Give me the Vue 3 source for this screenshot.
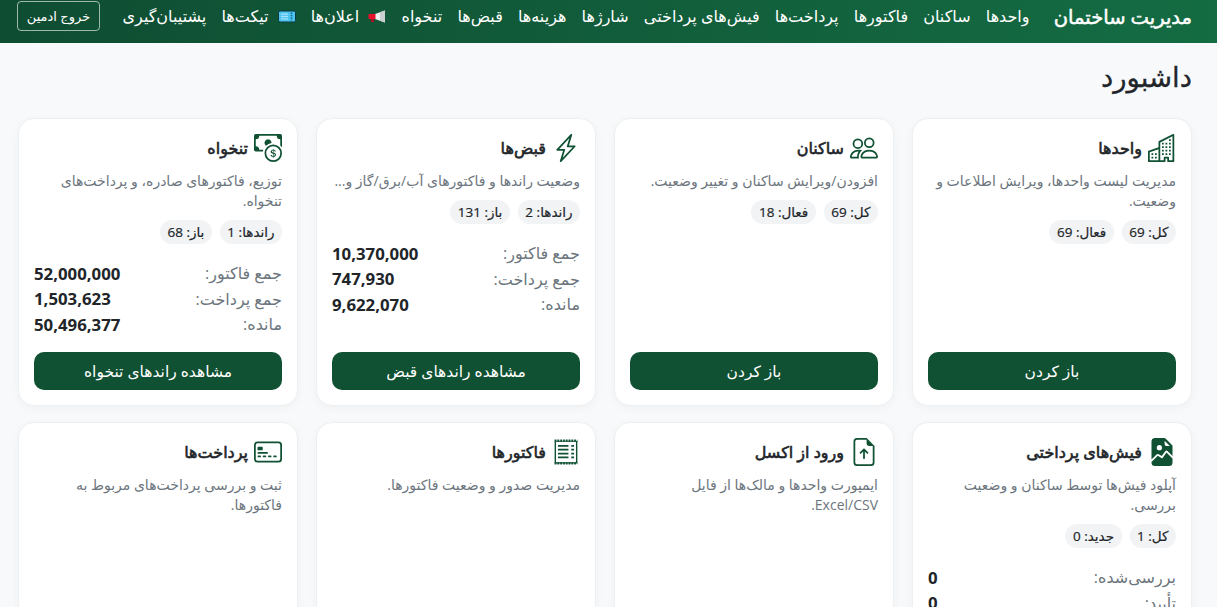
<template>
  <div class="page" dir="rtl">
    <nav class="navbar">
      <span class="brand">مدیریت ساختمان</span>
      <a v-for="link in links" :key="link.text" class="nav-link">
        <svg v-if="link.icon === 'megaphone'" class="emoji" viewBox="0 0 18 13">
          <path d="M17 0.5 7 4v5l10 3.5z" fill="#eef0f0" />
          <path d="M17 0.5 12 2.3v8.4l5 1.8z" fill="#c9cfcf" />
          <rect x="0.5" y="4" width="7" height="5" rx="0.5" fill="#e8112d" />
          <rect x="3" y="9" width="3" height="3" fill="#b00d22" />
        </svg>
        <svg v-if="link.icon === 'ticket'" class="emoji" viewBox="0 0 18 12">
          <rect x="0.5" y="0.5" width="17" height="11" rx="1.5" fill="#4fc3f0" stroke="#063a3f" />
          <rect x="3" y="3" width="7" height="1.2" fill="#a5e3fa" />
          <rect x="3" y="5.4" width="7" height="1.2" fill="#a5e3fa" />
          <rect x="3" y="7.8" width="7" height="1.2" fill="#a5e3fa" />
          <path d="M13.5 2v8" stroke="#0f6b8c" stroke-width="1.6" stroke-dasharray="1.4 1" />
        </svg>
        {{ link.text }}
      </a>
      <button class="logout">خروج ادمین</button>
    </nav>

    <main class="content">
      <h1 class="page-title">داشبورد</h1>
      <div class="grid">
        <section v-for="card in cards" :key="card.title" class="card">
          <div class="card-head">
            <svg class="icon" viewBox="0 0 16 16" fill="currentColor" v-html="icons[card.icon]"></svg>
            <h2>{{ card.title }}</h2>
          </div>
          <p class="desc">{{ card.desc }}</p>
          <div v-if="card.chips" class="chips">
            <span v-for="chip in card.chips" :key="chip" class="chip">{{ chip }}</span>
          </div>
          <div v-if="card.metrics" class="metrics">
            <div v-for="m in card.metrics" :key="m[0]" class="metric">
              <span class="metric-label">{{ m[0] }}</span>
              <b class="metric-value">{{ m[1] }}</b>
            </div>
          </div>
          <button class="open-btn">{{ card.action || 'باز کردن' }}</button>
        </section>
      </div>
    </main>
  </div>
</template>

<script setup>
const links = [
  { text: 'واحدها' },
  { text: 'ساکنان' },
  { text: 'فاکتورها' },
  { text: 'پرداخت‌ها' },
  { text: 'فیش‌های پرداختی' },
  { text: 'شارژها' },
  { text: 'هزینه‌ها' },
  { text: 'قبض‌ها' },
  { text: 'تنخواه' },
  { text: 'اعلان‌ها', icon: 'megaphone' },
  { text: 'تیکت‌ها', icon: 'ticket' },
  { text: 'پشتیبان‌گیری' }
]

const icons = {
  buildings:
    '<path d="M14.763.075A.5.5 0 0 1 15 .5v15a.5.5 0 0 1-.5.5h-3a.5.5 0 0 1-.5-.5V14h-1v1.5a.5.5 0 0 1-.5.5h-9a.5.5 0 0 1-.5-.5V10a.5.5 0 0 1 .342-.474L6 7.64V4.5a.5.5 0 0 1 .276-.447l8-4a.5.5 0 0 1 .487.022ZM6 8.694 1 10.36V15h5V8.694ZM7 15h2v-1.5a.5.5 0 0 1 .5-.5h2a.5.5 0 0 1 .5.5V15h2V1.309l-7 3.5V15Z"/><path d="M2 11h1v1H2v-1Zm2 0h1v1H4v-1Zm-2 2h1v1H2v-1Zm2 0h1v1H4v-1Zm4-4h1v1H8V9Zm2 0h1v1h-1V9Zm-2 2h1v1H8v-1Zm2 0h1v1h-1v-1Zm2-2h1v1h-1V9Zm0 2h1v1h-1v-1ZM8 7h1v1H8V7Zm2 0h1v1h-1V7Zm2 0h1v1h-1V7ZM8 5h1v1H8V5Zm2 0h1v1h-1V5Zm2 0h1v1h-1V5Zm0-2h1v1h-1V3Z"/>',
  people:
    '<path d="M15 14s1 0 1-1-1-4-5-4-5 3-5 4 1 1 1 1h8Zm-7.978-1A.261.261 0 0 1 7 12.996c.001-.264.167-1.03.76-1.72C8.312 10.629 9.282 10 11 10c1.717 0 2.687.63 3.24 1.276.593.69.758 1.457.76 1.72l-.008.002a.274.274 0 0 1-.014.002H7.022ZM11 7a2 2 0 1 0 0-4 2 2 0 0 0 0 4Zm3-2a3 3 0 1 1-6 0 3 3 0 0 1 6 0ZM6.936 9.28a5.88 5.88 0 0 0-1.23-.247A7.35 7.35 0 0 0 5 9c-4 0-5 3-5 4 0 .667.333 1 1 1h4.216A2.238 2.238 0 0 1 5 13c0-1.01.377-2.042 1.09-2.904.243-.294.526-.569.846-.816ZM4.92 10A5.493 5.493 0 0 0 4 13H1c0-.26.164-1.03.76-1.724.545-.636 1.492-1.256 3.16-1.275ZM1.5 5.5a3 3 0 1 1 6 0 3 3 0 0 1-6 0Zm3-2a2 2 0 1 0 0 4 2 2 0 0 0 0-4Z"/>',
  bolt:
    '<path d="M11.251.068a.5.5 0 0 1 .227.58L9.677 6.5H13a.5.5 0 0 1 .364.843l-8 8.5a.5.5 0 0 1-.842-.49L6.323 9.5H3a.5.5 0 0 1-.364-.843l8-8.5a.5.5 0 0 1 .615-.09zM4.157 8.5H7a.5.5 0 0 1 .478.647L6.11 13.59l5.732-6.09H9a.5.5 0 0 1-.478-.647L9.89 2.41 4.157 8.5z"/>',
  cash:
    '<path fill-rule="evenodd" d="M11 15a4 4 0 1 0 0-8 4 4 0 0 0 0 8zm5-4a5 5 0 1 1-10 0 5 5 0 0 1 10 0z"/><path d="M9.438 11.944c.047.596.518 1.06 1.363 1.116v.44h.375v-.443c.875-.061 1.386-.529 1.386-1.207 0-.618-.39-.936-1.09-1.1l-.296-.07v-1.2c.376.043.614.248.671.532h.658c-.047-.575-.54-1.024-1.329-1.073V8.5h-.375v.45c-.747.073-1.255.522-1.255 1.158 0 .562.378.92 1.007 1.066l.248.061v1.272c-.384-.058-.639-.27-.696-.563h-.668zm1.36-1.354c-.369-.085-.569-.26-.569-.522 0-.294.216-.514.572-.578v1.1h-.003zm.432.746c.449.104.655.272.655.569 0 .339-.257.571-.709.614v-1.195l.054.012z"/><path d="M1 0a1 1 0 0 0-1 1v8a1 1 0 0 0 1 1h4.083c.058-.344.145-.678.258-1H3a2 2 0 0 0-2-2V3a2 2 0 0 0 2-2h10a2 2 0 0 0 2 2v3.528c.38.34.717.728 1 1.154V1a1 1 0 0 0-1-1H1z"/><path d="M9.998 5.083 10 5a2 2 0 1 0-3.132 1.65 5.982 5.982 0 0 1 3.13-1.567z"/>',
  image:
    '<path d="M4 0h5.293A1 1 0 0 1 10 .293L13.707 4a1 1 0 0 1 .293.707v5.586l-2.73-2.73a1 1 0 0 0-1.52.127l-1.889 2.644-1.769-1.062a1 1 0 0 0-1.222.15L2 12.292V2a2 2 0 0 1 2-2zm5.5 1.5v2a1 1 0 0 0 1 1h2l-3-3zm-1.498 4a1.5 1.5 0 1 0-3 0 1.5 1.5 0 0 0 3 0z"/><path d="M10.564 8.27 14 11.708V14a2 2 0 0 1-2 2H4a2 2 0 0 1-2-2v-.293l3.578-3.577 2.56 1.536 2.426-3.395z"/>',
  upload:
    '<path d="M8.5 11.5a.5.5 0 0 1-1 0V7.707L6.354 8.854a.5.5 0 1 1-.708-.708l2-2a.5.5 0 0 1 .708 0l2 2a.5.5 0 0 1-.708.708L8.5 7.707V11.5z"/><path d="M14 14V4.5L9.5 0H4a2 2 0 0 0-2 2v12a2 2 0 0 0 2 2h8a2 2 0 0 0 2-2zM9.5 3A1.5 1.5 0 0 0 11 4.5h2V14a1 1 0 0 1-1 1H4a1 1 0 0 1-1-1V2a1 1 0 0 1 1-1h5.5v2z"/>',
  receipt:
    '<path d="M3.4 4h6v1h-6zm0 2.2h6v1h-6zm0 2.2h6v1h-6zm0 2.2h6v1h-6zM11 4h1.6v1H11zm0 2.2h1.6v1H11zm0 2.2h1.6v1H11zm0 2.2h1.6v1H11z"/><path fill-rule="evenodd" d="M1.5 1.5h13v13h-13zM2.3 2.2v11.6h11.4V2.2z"/><path d="M1.5 1.5h13" stroke="currentColor" stroke-width="1.2" stroke-dasharray="1 .6"/><path d="M1.5 14.5h13" stroke="currentColor" stroke-width="1.2" stroke-dasharray="1 .6"/>',
  card:
    '<path d="M14 3a1 1 0 0 1 1 1v8a1 1 0 0 1-1 1H2a1 1 0 0 1-1-1V4a1 1 0 0 1 1-1h12zM2 2a2 2 0 0 0-2 2v8a2 2 0 0 0 2 2h12a2 2 0 0 0 2-2V4a2 2 0 0 0-2-2H2z"/><path d="M2 5.5a.5.5 0 0 1 .5-.5h2a.5.5 0 0 1 .5.5v1a.5.5 0 0 1-.5.5h-2a.5.5 0 0 1-.5-.5v-1zm0 3a.5.5 0 0 1 .5-.5h5a.5.5 0 0 1 0 1h-5a.5.5 0 0 1-.5-.5zm0 2a.5.5 0 0 1 .5-.5h1a.5.5 0 0 1 0 1h-1a.5.5 0 0 1-.5-.5zm3 0a.5.5 0 0 1 .5-.5h1a.5.5 0 0 1 0 1h-1a.5.5 0 0 1-.5-.5zm3 0a.5.5 0 0 1 .5-.5h1a.5.5 0 0 1 0 1h-1a.5.5 0 0 1-.5-.5zm3 0a.5.5 0 0 1 .5-.5h1a.5.5 0 0 1 0 1h-1a.5.5 0 0 1-.5-.5z"/>'
}

const cards = [
  {
    title: 'واحدها',
    icon: 'buildings',
    desc: 'مدیریت لیست واحدها، ویرایش اطلاعات و وضعیت.',
    chips: ['کل: 69', 'فعال: 69']
  },
  {
    title: 'ساکنان',
    icon: 'people',
    desc: 'افزودن/ویرایش ساکنان و تغییر وضعیت.',
    chips: ['کل: 69', 'فعال: 18']
  },
  {
    title: 'قبض‌ها',
    icon: 'bolt',
    desc: 'وضعیت راندها و فاکتورهای آب/برق/گاز و...',
    chips: ['راندها: 2', 'باز: 131'],
    metrics: [
      ['جمع فاکتور:', '10,370,000'],
      ['جمع پرداخت:', '747,930'],
      ['مانده:', '9,622,070']
    ],
    action: 'مشاهده راندهای قبض'
  },
  {
    title: 'تنخواه',
    icon: 'cash',
    desc: 'توزیع، فاکتورهای صادره، و پرداخت‌های تنخواه.',
    chips: ['راندها: 1', 'باز: 68'],
    metrics: [
      ['جمع فاکتور:', '52,000,000'],
      ['جمع پرداخت:', '1,503,623'],
      ['مانده:', '50,496,377']
    ],
    action: 'مشاهده راندهای تنخواه'
  },
  {
    title: 'فیش‌های پرداختی',
    icon: 'image',
    desc: 'آپلود فیش‌ها توسط ساکنان و وضعیت بررسی.',
    chips: ['کل: 1', 'جدید: 0'],
    metrics: [
      ['بررسی‌شده:', '0'],
      ['تأیید:', '0'],
      ['رد:', '0']
    ]
  },
  {
    title: 'ورود از اکسل',
    icon: 'upload',
    desc: 'ایمپورت واحدها و مالک‌ها از فایل Excel/CSV.'
  },
  {
    title: 'فاکتورها',
    icon: 'receipt',
    desc: 'مدیریت صدور و وضعیت فاکتورها.'
  },
  {
    title: 'پرداخت‌ها',
    icon: 'card',
    desc: 'ثبت و بررسی پرداخت‌های مربوط به فاکتورها.'
  }
]
</script>

<style>
html,
body {
  margin: 0;
  overflow: hidden;
  background: #f8f9fb;
}
</style>

<style scoped>
.page {
  min-height: 607px;
  font-family: "Open Sans", "DejaVu Sans", sans-serif;
  color: #212529;
  background: #f8f9fb;
}

.navbar {
  height: 43px;
  box-sizing: border-box;
  display: flex;
  align-items: center;
  padding: 0 25px 11px 17px;
  gap: 15.2px;
  background: linear-gradient(90deg, #0f4d32, #146c43);
  color: #fff;
}

.brand {
  flex: none;
  font-size: 19.5px;
  font-weight: 400;
  white-space: nowrap;
  -webkit-text-stroke: 0.5px #fff;
  margin-left: 9px;
}

.nav-link {
  flex: none;
  display: flex;
  align-items: center;
  gap: 9px;
  font-size: 16px;
  color: #fff;
  white-space: nowrap;
}

.emoji {
  width: 18px;
  height: 13px;
  flex: none;
}

.logout {
  flex: none;
  margin-right: auto;
  height: 30px;
  width: 83px;
  padding: 0;
  font: inherit;
  font-size: 13px;
  color: #fff;
  background: transparent;
  border: 1px solid rgba(255, 255, 255, 0.6);
  border-radius: 4px;
}

.content {
  padding: 0 25px 0 18px;
}

.page-title {
  margin: 0;
  padding: 14px 0 22px;
  font-size: 27.5px;
  line-height: 39px;
  font-weight: 400;
  -webkit-text-stroke: 0.3px #212529;
}

.grid {
  display: grid;
  grid-template-columns: repeat(4, 280px);
  gap: 16px 18px;
}

.card {
  display: flex;
  flex-direction: column;
  padding: 15px;
  background: #fff;
  border: 1px solid #edf0f2;
  border-radius: 16px;
  box-shadow: 0 2px 10px rgba(0, 0, 0, 0.04);
  box-sizing: border-box;
}

.card-head {
  display: flex;
  align-items: center;
  gap: 6px;
  height: 28px;
}

.icon {
  width: 28px;
  height: 28px;
  color: #0f5132;
  flex: none;
}

.card-head h2 {
  margin: 0;
  font-size: 16px;
  font-weight: 400;
  -webkit-text-stroke: 0.6px #212529;
}

.desc {
  margin: 9px 0 0;
  font-size: 14px;
  line-height: 20px;
  color: #6c757d;
}

.chips {
  display: flex;
  gap: 8px;
  margin-top: 9px;
}

.chip {
  height: 24px;
  line-height: 24px;
  padding: 0 7.5px;
  font-size: 13.5px;
  font-weight: 500;
  -webkit-text-stroke: 0.2px #212529;
  background: #f1f3f5;
  border-radius: 999px;
}

.metrics {
  margin: 16.5px 0 15px;
}

.metric {
  display: flex;
  justify-content: space-between;
  align-items: center;
  height: 25.5px;
}

.metric-label {
  font-size: 16px;
  color: #6c757d;
}

.metric-value {
  font-size: 16.8px;
  font-weight: 700;
}

.open-btn {
  margin-top: auto;
  height: 38px;
  font: inherit;
  font-size: 15.5px;
  color: #fff;
  background: #0f5132;
  border: 0;
  border-radius: 10px;
}
</style>
